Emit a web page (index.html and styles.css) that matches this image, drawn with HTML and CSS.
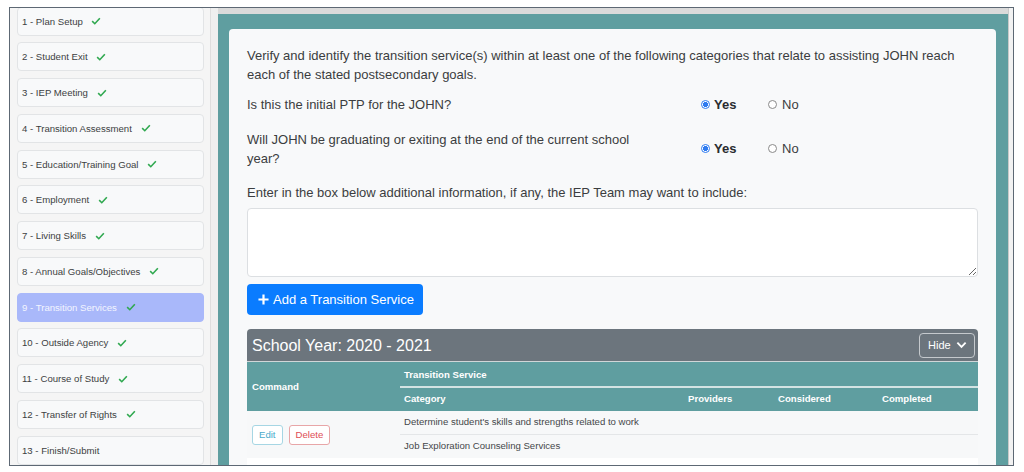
FILE: index.html
```html
<!DOCTYPE html>
<html lang="en">
<head>
<meta charset="utf-8">
<title>Transition Services</title>
<link rel="stylesheet" href="styles.css">
</head>
<body>
<div class="frame">
  <aside class="sidebar">
    <ul class="steps">
      <li class="step">1 - Plan Setup <svg class="check" viewBox="0 0 12 10"><path d="M1.2 5.2 L4.5 8.4 L10.8 1.6"/></svg></li>
      <li class="step">2 - Student Exit <svg class="check" viewBox="0 0 12 10"><path d="M1.2 5.2 L4.5 8.4 L10.8 1.6"/></svg></li>
      <li class="step">3 - IEP Meeting <svg class="check" viewBox="0 0 12 10"><path d="M1.2 5.2 L4.5 8.4 L10.8 1.6"/></svg></li>
      <li class="step">4 - Transition Assessment <svg class="check" viewBox="0 0 12 10"><path d="M1.2 5.2 L4.5 8.4 L10.8 1.6"/></svg></li>
      <li class="step">5 - Education/Training Goal <svg class="check" viewBox="0 0 12 10"><path d="M1.2 5.2 L4.5 8.4 L10.8 1.6"/></svg></li>
      <li class="step">6 - Employment <svg class="check" viewBox="0 0 12 10"><path d="M1.2 5.2 L4.5 8.4 L10.8 1.6"/></svg></li>
      <li class="step">7 - Living Skills <svg class="check" viewBox="0 0 12 10"><path d="M1.2 5.2 L4.5 8.4 L10.8 1.6"/></svg></li>
      <li class="step">8 - Annual Goals/Objectives <svg class="check" viewBox="0 0 12 10"><path d="M1.2 5.2 L4.5 8.4 L10.8 1.6"/></svg></li>
      <li class="step active">9 - Transition Services <svg class="check" viewBox="0 0 12 10"><path d="M1.2 5.2 L4.5 8.4 L10.8 1.6"/></svg></li>
      <li class="step">10 - Outside Agency <svg class="check" viewBox="0 0 12 10"><path d="M1.2 5.2 L4.5 8.4 L10.8 1.6"/></svg></li>
      <li class="step">11 - Course of Study <svg class="check" viewBox="0 0 12 10"><path d="M1.2 5.2 L4.5 8.4 L10.8 1.6"/></svg></li>
      <li class="step">12 - Transfer of Rights <svg class="check" viewBox="0 0 12 10"><path d="M1.2 5.2 L4.5 8.4 L10.8 1.6"/></svg></li>
      <li class="step">13 - Finish/Submit</li>
    </ul>
  </aside>
  <div class="gutter"></div>
  <main class="main">
    <div class="teal">
      <section class="card">
        <p class="intro">Verify and identify the transition service(s) within at least one of the following categories that relate to assisting JOHN reach each of the stated postsecondary goals.</p>
        <div class="q q1">
          <div class="q-text">Is this the initial PTP for the JOHN?</div>
          <div class="q-opts">
            <span class="opt opt-yes"><span class="radio checked"></span><b>Yes</b></span>
            <span class="opt"><span class="radio"></span>No</span>
          </div>
        </div>
        <div class="q q2">
          <div class="q-text">Will JOHN be graduating or exiting at the end of the current school year?</div>
          <div class="q-opts">
            <span class="opt opt-yes"><span class="radio checked"></span><b>Yes</b></span>
            <span class="opt"><span class="radio"></span>No</span>
          </div>
        </div>
        <p class="enter">Enter in the box below additional information, if any, the IEP Team may want to include:</p>
        <textarea class="notes"></textarea>
        <button class="add-btn"><svg class="plus" viewBox="0 0 12 12"><path d="M6 0.5 V11.5 M0.5 6 H11.5"/></svg>Add a Transition Service</button>
        <div class="panel">
          <div class="panel-head">
            <span class="year">School Year: 2020 - 2021</span>
            <button class="hide-btn">Hide <svg class="chev" viewBox="0 0 12 8"><path d="M1.5 1.5 L6 6 L10.5 1.5"/></svg></button>
          </div>
          <table class="svc">
            <colgroup>
              <col class="c-cmd"><col class="c-cat"><col class="c-prov"><col class="c-cons"><col class="c-comp">
            </colgroup>
            <thead>
              <tr class="h1">
                <th rowspan="2" class="th-cmd">Command</th>
                <th colspan="4" class="th-ts">Transition Service</th>
              </tr>
              <tr class="h2">
                <th>Category</th>
                <th>Providers</th>
                <th>Considered</th>
                <th>Completed</th>
              </tr>
            </thead>
            <tbody>
              <tr class="r1">
                <td rowspan="2" class="td-cmd"><span class="btn-edit">Edit</span><span class="btn-del">Delete</span></td>
                <td>Determine student's skills and strengths related to work</td>
                <td></td><td></td><td></td>
              </tr>
              <tr class="r2">
                <td>Job Exploration Counseling Services</td>
                <td></td><td></td><td></td>
              </tr>
            </tbody>
          </table>
          <div class="after"></div>
        </div>
      </section>
    </div>
  </main>
  <div class="right-strip"></div>
</div>
</body>
</html>
```
FILE: styles.css
```css
* { box-sizing: border-box; }
html, body { margin: 0; padding: 0; background: #ffffff; }
body { font-family: "Liberation Sans", Arial, sans-serif; color: #3b3d40; }

.frame {
  margin: 7px 10px 0 9px;
  height: 459px;
  border: 1px solid #5d6874;
  display: flex;
  overflow: hidden;
  background: #f4f4f4;
}

/* Sidebar */
.sidebar {
  width: 201px;
  flex: none;
  background: #f5f5f5;
  border-right: 1px solid #dedede;
  padding: 0 6px 0 7px;
  overflow: hidden;
}
.steps { list-style: none; margin: -1.5px 0 0; padding: 0; }
.step {
  height: 29px;
  margin-bottom: 6.75px;
  background: #f8f9fa;
  border: 1px solid #e2e4e6;
  border-radius: 4px;
  display: flex;
  align-items: center;
  padding-left: 4px;
  font-size: 9.6px;
  color: #3d3f42;
  white-space: pre;
}
.step.active { background: #a9b8fa; border-color: #a9b8fa; color: #f3f5ff; }
.check { width: 10px; height: 8px; margin-left: 6px; fill: none; stroke: #2fa84f; stroke-width: 2; }

.gutter { width: 7px; flex: none; background: #efefef; }

/* Main */
.main { width: 790px; flex: none; background: #dadada; padding-top: 6px; }
.teal { background: #5f9ea0; height: 100%; padding: 15px 12px 0 11px; }
.card {
  background: #f8f9fa;
  border-radius: 4px 4px 0 0;
  height: 100%;
  padding: 16.5px 18px 0;
  font-size: 13px;
  line-height: 19px;
}
.right-strip { flex: 1; background: #f2f2f2; border-left: 1px solid #c9c9c9; }

.intro { margin: 0 0 11px; }
.q { display: flex; align-items: center; }
.q1 { margin-bottom: 16px; }
.q2 { margin-bottom: 15px; }
.q-text { width: 454px; flex: none; padding-right: 50px; }
.q-opts { display: flex; align-items: center; }
.opt { display: flex; align-items: center; }
.opt-yes { width: 67px; }
.opt b { font-weight: bold; color: #2a2c2f; }
.radio {
  width: 9px; height: 9px;
  border-radius: 50%;
  border: 1px solid #8a8a8a;
  background: #fff;
  margin-right: 5px;
}
.opt-yes .radio { margin-right: 4px; }
.radio.checked {
  border: 1px solid #2e7bf0;
  background: radial-gradient(circle, #2e7bf0 0, #2e7bf0 2.3px, #ffffff 2.8px);
}

.enter { margin: 0 0 6.5px; }
.notes {
  display: block;
  width: 100%;
  height: 69px;
  border: 1px solid #dcdfe2;
  border-radius: 4px;
  background: #ffffff;
  margin: 0;
}
.add-btn {
  margin-top: 7px;
  height: 31px;
  width: 176px;
  background: #0a7cff;
  color: #ffffff;
  border: none;
  border-radius: 4px;
  font-family: "Liberation Sans", Arial, sans-serif;
  font-size: 13px;
  display: flex;
  align-items: center;
  padding: 0 0 0 11px;
}
.plus { width: 11px; height: 11px; margin-right: 4px; fill: none; stroke: #ffffff; stroke-width: 2.4; }

.panel { margin-top: 14px; }
.panel-head {
  height: 32px;
  background: #6c757d;
  border-radius: 4px 4px 0 0;
  display: flex;
  align-items: center;
  justify-content: space-between;
  padding: 0 3px 0 5px;
}
.year { color: #ffffff; font-size: 16px; }
.hide-btn {
  width: 56px; height: 25px;
  background: transparent;
  border: 1px solid #c5c9cd;
  border-radius: 4px;
  color: #ffffff;
  font-family: "Liberation Sans", Arial, sans-serif;
  font-size: 11px;
  display: flex;
  align-items: center;
  padding: 0 0 0 8px;
}
.chev { width: 11px; height: 8px; margin-left: 5px; fill: none; stroke: #ffffff; stroke-width: 2; }

.svc {
  width: 100%;
  table-layout: fixed;
  border-collapse: collapse;
  border-top: 1px solid #d0d6d8;
}
.c-cmd { width: 153px; }
.c-cat { width: 284px; }
.c-prov { width: 90px; }
.c-cons { width: 104px; }
.c-comp { width: 100px; }
.svc thead { background: #5f9ea0; }
.svc th {
  color: #ffffff;
  font-size: 9.6px;
  font-weight: bold;
  text-align: left;
  padding: 0 4px;
  line-height: 12px;
}
.svc .th-cmd { padding-left: 5px; padding-top: 1px; }
.h1 { height: 25px; }
.h1 .th-ts { padding-top: 2px; }
.th-ts { border-bottom: 2px solid #d3e3e3; }
.h2 { height: 24px; }
.svc tbody { background: #f7f8f9; }
.svc td {
  font-size: 9.6px;
  color: #45474a;
  padding: 0 4px;
  line-height: 12px;
}
.r1 { height: 24px; }
.r1 td { border-bottom: 1px solid #e4e6e8; }
.r1 td.td-cmd { border-bottom: none; }
.r2 { height: 23px; }
.td-cmd { padding-left: 5px !important; padding-top: 2px !important; }
.btn-edit, .btn-del {
  display: inline-flex;
  align-items: center;
  height: 20px;
  padding: 0 6px;
  border-radius: 3px;
  background: #ffffff;
  font-size: 9.6px;
}
.btn-edit { border: 1px solid #a6d6e4; color: #4aaacb; margin-right: 6px; }
.btn-del { border: 1px solid #e8a6a8; color: #de4d55; }
.after { height: 20px; background: #ffffff; }
```
